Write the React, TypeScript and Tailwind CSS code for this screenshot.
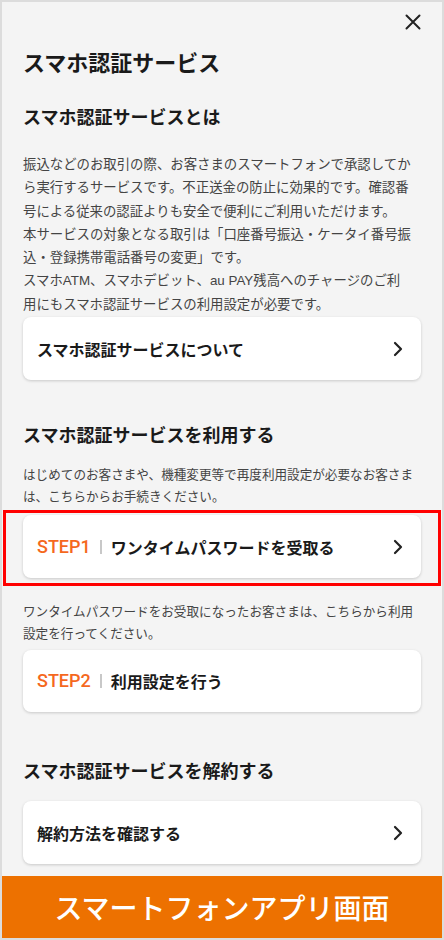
import React from "react";

const font = { fontFamily: '"Noto Sans CJK JP", "Noto Sans", sans-serif' };
const bodyFont = { fontFamily: '"Liberation Sans", "Noto Sans CJK JP", sans-serif' };

function Chevron() {
  return (
    <svg width="10" height="16" viewBox="0 0 10 16" fill="none" className="shrink-0">
      <polyline points="2,2 8,8 2,14" stroke="#222" strokeWidth="2.2" strokeLinecap="round" strokeLinejoin="round" />
    </svg>
  );
}

function Card({ children, chevron = true, h = "h-[63px]" }: { children: React.ReactNode; chevron?: boolean; h?: string }) {
  return (
    <div className={`${h} bg-white rounded-lg shadow-[0_1px_3px_rgba(0,0,0,0.18)] flex items-center justify-between pl-[14px] pr-[18px]`}>
      <div className="flex items-center text-[16px] leading-[24px] font-bold text-[#1a1a1a]">{children}</div>
      {chevron && <Chevron />}
    </div>
  );
}

function Step({ n, label }: { n: string; label: string }) {
  return (
    <>
      <span className="text-[#f5681e] font-medium text-[18px]" style={{ fontFamily: 'Roboto, "Liberation Sans", sans-serif' }}>STEP{n}</span>
      <span className="ml-[9px] mr-[9px] w-[2px] h-[14px] bg-[#c8c8c8]" />
      <span>{label}</span>
    </>
  );
}

export default function App() {
  return (
    <div className="w-[444px] h-[940px] border-2 border-[#dcdcdc] bg-[#f4f4f4] flex flex-col overflow-hidden" style={font}>
      <div className="flex-1 px-[21px]">
        <div className="h-[40px] flex items-center justify-end">
          <svg width="16" height="16" viewBox="0 0 16 16">
            <path d="M1.5 1.5 L14.5 14.5 M14.5 1.5 L1.5 14.5" stroke="#222" strokeWidth="2" strokeLinecap="round" />
          </svg>
        </div>
        <h1 className="mt-[4px] text-[22px] leading-[30px] font-bold text-[#1a1a1a]">スマホ認証サービス</h1>
        <h2 className="mt-[27px] text-[18px] leading-[26px] font-bold text-[#1a1a1a]">スマホ認証サービスとは</h2>
        <p className="mt-[24px] text-[13.4px] leading-[23.3px] text-[#444]" style={bodyFont}>
          振込などのお取引の際、お客さまのスマートフォンで承認してから実行するサービスです。不正送金の防止に効果的です。確認番号による従来の認証よりも安全で便利にご利用いただけます。
          <br />
          本サービスの対象となる取引は「口座番号振込・ケータイ番号振込・登録携帯電話番号の変更」です。
          <br />
          スマホATM、スマホデビット、au PAY残高へのチャージのご利
          <br />
          用にもスマホ認証サービスの利用設定が必要です。
        </p>
        <div className="mt-[1px]">
          <Card>スマホ認証サービスについて</Card>
        </div>
        <h2 className="mt-[41px] text-[18px] leading-[26px] font-bold text-[#1a1a1a]">スマホ認証サービスを利用する</h2>
        <p className="mt-[17px] text-[12.6px] leading-[22px] text-[#444]" style={bodyFont}>
          はじめてのお客さまや、機種変更等で再度利用設定が必要なお客さまは、こちらからお手続きください。
        </p>
        <div className="mt-[7px] relative">
          <Card>
            <Step n="1" label="ワンタイムパスワードを受取る" />
          </Card>
          <div className="absolute -left-[20px] -right-[20px] -top-[5px] -bottom-[8px] border-[3px] border-[#ff0000] pointer-events-none" />
        </div>
        <p className="mt-[23px] text-[12.6px] leading-[22px] text-[#444]" style={bodyFont}>
          ワンタイムパスワードをお受取になったお客さまは、こちらから利用設定を行ってください。
        </p>
        <div className="mt-[5px]">
          <Card chevron={false} h="h-[62px]">
            <Step n="2" label="利用設定を行う" />
          </Card>
        </div>
        <h2 className="mt-[45px] text-[18px] leading-[26px] font-bold text-[#1a1a1a]">スマホ認証サービスを解約する</h2>
        <div className="mt-[18px]">
          <Card>解約方法を確認する</Card>
        </div>
      </div>
      <div className="h-[62px] bg-[#ed7100] flex items-center justify-center">
        <span className="text-white text-[28px] leading-[36px] font-medium">スマートフォンアプリ画面</span>
      </div>
    </div>
  );
}
